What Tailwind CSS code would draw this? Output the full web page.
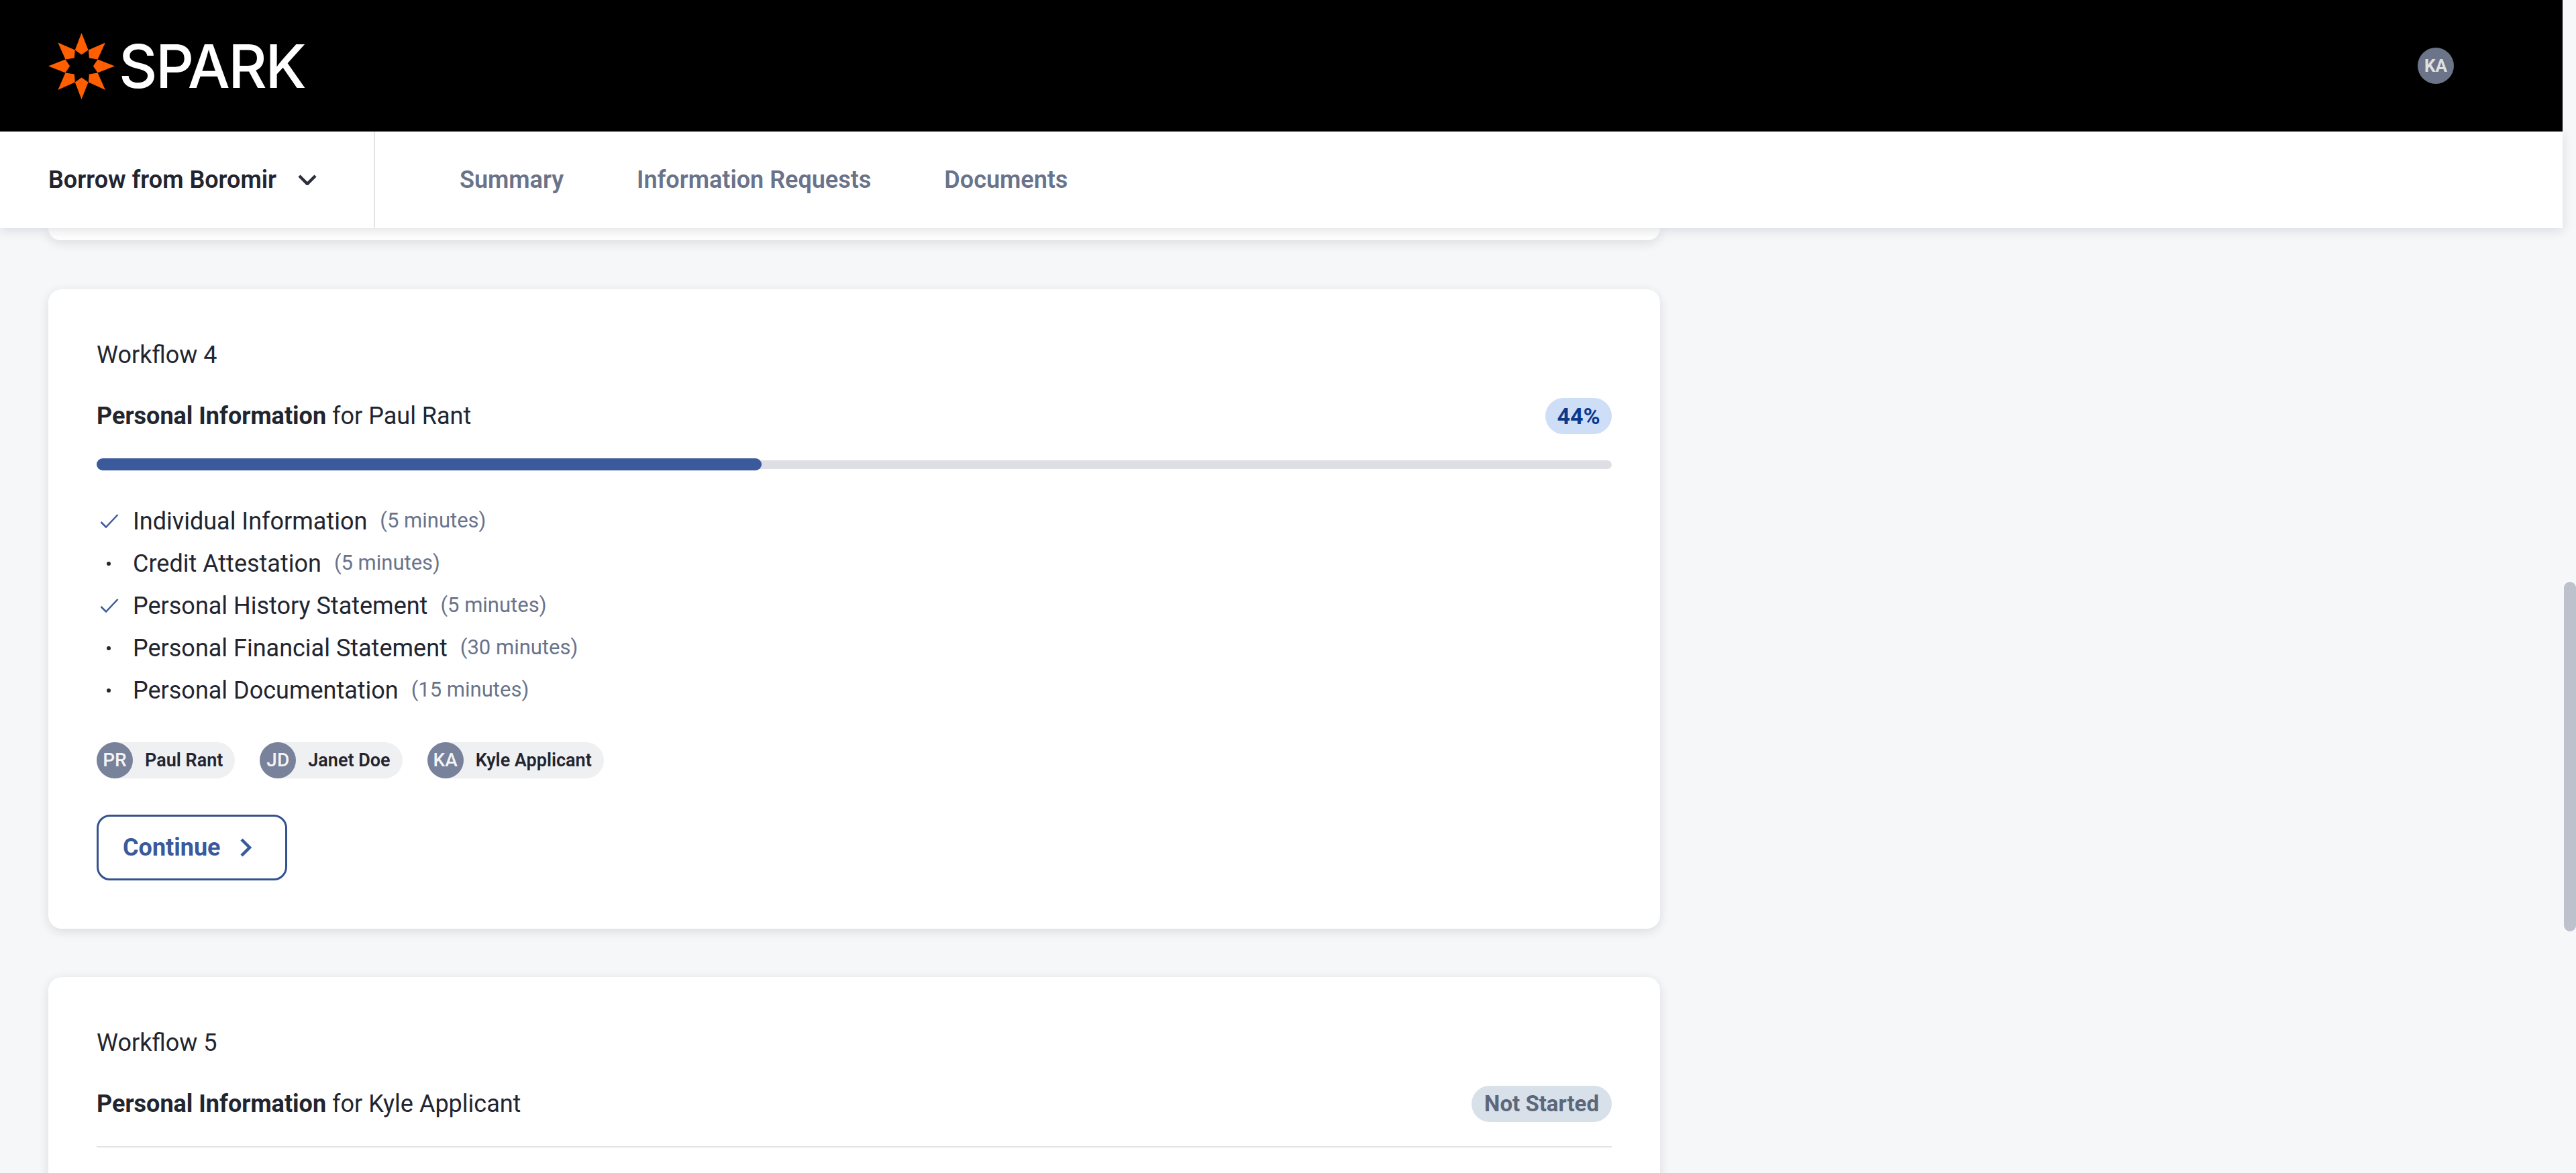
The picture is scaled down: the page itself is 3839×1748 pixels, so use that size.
<!DOCTYPE html>
<html lang="en">
<head>
  <meta charset="UTF-8">
  <title>Spark</title>
  <script src="https://cdn.jsdelivr.net/npm/@tailwindcss/browser@4"></script>
</head>
<body class="bg-[#f6f7f9] font-['Roboto',sans-serif] text-[#22252f] overflow-hidden">
<div class="flex h-[1748px] w-[3839px] overflow-hidden">
  <div class="w-[3819px] shrink-0">
    <!-- top bar -->
    <header class="bg-black h-[196px] flex items-center justify-between pl-[72px] pr-[162px]">
      <div class="flex items-center gap-[6px]">
        <svg width="99" height="99" viewBox="96 84 296 296" fill="#ff5f00">
          <polygon points="244,84 274,160 244,181 215,160"/>
          <polygon points="350,127 316,202 278,196 275,160"/>
          <polygon points="392,232 316,202 296,232 316,262"/>
          <polygon points="350,338 316,262 278,268 275,304"/>
          <polygon points="244,380 274,304 244,283 215,304"/>
          <polygon points="139,338 172,262 212,268 215,304"/>
          <polygon points="96,232 172,202 192,232 172,262"/>
          <polygon points="139,127 172,202 212,196 215,160"/>
        </svg>
        <span class="text-white text-[89px] leading-none font-['Inter',sans-serif] font-medium tracking-[-2.5px]">SPARK</span>
      </div>
      <div class="w-[54px] h-[54px] rounded-full bg-[#6b7489] text-[#e0e0e0] text-[26px] font-bold flex items-center justify-center">KA</div>
    </header>

    <!-- sub nav -->
    <nav class="relative z-10 bg-white h-[144px] flex shadow-[0_4px_16px_rgba(20,25,40,0.12)]">
      <div class="w-[559px] border-r-2 border-[#e3e4e8] pl-[72px] flex items-center gap-[32px] text-[36px] font-semibold">
        <span>Borrow from Boromir</span>
        <svg width="28" height="16" viewBox="0 0 28 16" fill="none" stroke="#2b2f3c" stroke-width="4.5"><path d="M2 2l12 12L26 2"/></svg>
      </div>
      <ul class="flex items-center gap-[109px] pl-[126px] text-[36px] font-semibold text-[#69738a]">
        <li>Summary</li>
        <li>Information Requests</li>
        <li>Documents</li>
      </ul>
    </nav>

    <main class="pl-[72px] w-[2474px]">
      <div class="h-[18px] bg-white rounded-b-[20px] shadow-[0_4px_16px_rgba(20,25,40,0.12)]"></div>

      <!-- workflow 4 -->
      <section class="mt-[73px] h-[953px] bg-white rounded-[20px] shadow-[0_4px_16px_rgba(20,25,40,0.12)] px-[72px] pt-[76px]">
        <p class="text-[36px] leading-[44px]">Workflow 4</p>
        <div class="mt-[42px] flex items-center justify-between h-[54px]">
          <p class="text-[36px]"><span class="font-bold">Personal Information</span> for Paul Rant</p>
          <span class="h-[54px] w-[99px] rounded-full bg-[#cedef6] text-[#0b3a8c] text-[34px] font-bold flex items-center justify-center">44%</span>
        </div>
        <div class="mt-[36px] h-[18px] flex items-center">
          <div class="w-full h-[13px] rounded-full bg-[#dddfe5] relative">
            <div class="absolute left-0 top-[-2.5px] h-[18px] w-[991px] rounded-full bg-[#3a5a9b]"></div>
          </div>
        </div>
        <ul class="mt-[44px] flex flex-col text-[36px]">
          <li class="h-[63px] flex items-center">
            <span class="w-[54px] pl-[5px]"><svg width="28" height="21" viewBox="0 0 28 21" fill="none" stroke="#3a5a9b" stroke-width="2.5"><path d="M1.5 12l7.5 7.5L26.5 1"/></svg></span>
            <span>Individual Information</span><span class="ml-[19px] text-[31px] text-[#69738a]">(5 minutes)</span>
          </li>
          <li class="h-[63px] flex items-center">
            <span class="w-[54px] pl-[15px]"><span class="block w-[6px] h-[6px] rounded-full bg-[#22252f]"></span></span>
            <span>Credit Attestation</span><span class="ml-[19px] text-[31px] text-[#69738a]">(5 minutes)</span>
          </li>
          <li class="h-[63px] flex items-center">
            <span class="w-[54px] pl-[5px]"><svg width="28" height="21" viewBox="0 0 28 21" fill="none" stroke="#3a5a9b" stroke-width="2.5"><path d="M1.5 12l7.5 7.5L26.5 1"/></svg></span>
            <span>Personal History Statement</span><span class="ml-[19px] text-[31px] text-[#69738a]">(5 minutes)</span>
          </li>
          <li class="h-[63px] flex items-center">
            <span class="w-[54px] pl-[15px]"><span class="block w-[6px] h-[6px] rounded-full bg-[#22252f]"></span></span>
            <span>Personal Financial Statement</span><span class="ml-[19px] text-[31px] text-[#69738a]">(30 minutes)</span>
          </li>
          <li class="h-[63px] flex items-center">
            <span class="w-[54px] pl-[15px]"><span class="block w-[6px] h-[6px] rounded-full bg-[#22252f]"></span></span>
            <span>Personal Documentation</span><span class="ml-[19px] text-[31px] text-[#69738a]">(15 minutes)</span>
          </li>
        </ul>
        <div class="mt-[46px] flex gap-[37px]">
          <div class="h-[54px] rounded-full bg-[#eff0f2] flex items-center pr-[18px] gap-[18px] text-[27px] font-semibold">
            <span class="w-[54px] h-[54px] rounded-full bg-[#78829a] text-[#f4f4f6] text-[28px] font-medium flex items-center justify-center">PR</span>Paul Rant
          </div>
          <div class="h-[54px] rounded-full bg-[#eff0f2] flex items-center pr-[18px] gap-[18px] text-[27px] font-semibold">
            <span class="w-[54px] h-[54px] rounded-full bg-[#78829a] text-[#f4f4f6] text-[28px] font-medium flex items-center justify-center">JD</span>Janet Doe
          </div>
          <div class="h-[54px] rounded-full bg-[#eff0f2] flex items-center pr-[18px] gap-[18px] text-[27px] font-semibold">
            <span class="w-[54px] h-[54px] rounded-full bg-[#78829a] text-[#f4f4f6] text-[28px] font-medium flex items-center justify-center">KA</span>Kyle Applicant
          </div>
        </div>
        <button class="mt-[54px] w-[284px] h-[98px] rounded-[20px] border-[3px] border-[#34528f] text-[#3a5a9b] text-[36px] font-bold flex items-center pl-[36px] gap-[28px]">
          Continue
          <svg width="18" height="28" viewBox="0 0 18 28" fill="none" stroke="#3a5a9b" stroke-width="4.5"><path d="M3 2l12 12L3 26"/></svg>
        </button>
      </section>

      <!-- workflow 5, runs off the bottom of the window -->
      <section class="mt-[72px] h-[600px] bg-white rounded-[20px] shadow-[0_4px_16px_rgba(20,25,40,0.12)] px-[72px] pt-[76px]">
        <p class="text-[36px] leading-[44px]">Workflow 5</p>
        <div class="mt-[42px] flex items-center justify-between h-[54px]">
          <p class="text-[36px]"><span class="font-bold">Personal Information</span> for Kyle Applicant</p>
          <span class="h-[54px] px-[19px] rounded-full bg-[#d8e0ea] text-[#5c677a] text-[33px] font-bold flex items-center">Not Started</span>
        </div>
        <div class="mt-[36px] h-[2px] bg-[#e5e5e5]"></div>
      </section>
    </main>
  </div>

  <!-- scrollbar -->
  <div class="w-[20px] pl-[2px] pt-[867px]">
    <div class="w-[18px] h-[521px] rounded-full bg-[#bcc1cc]"></div>
  </div>
</div>
</body>
</html>
